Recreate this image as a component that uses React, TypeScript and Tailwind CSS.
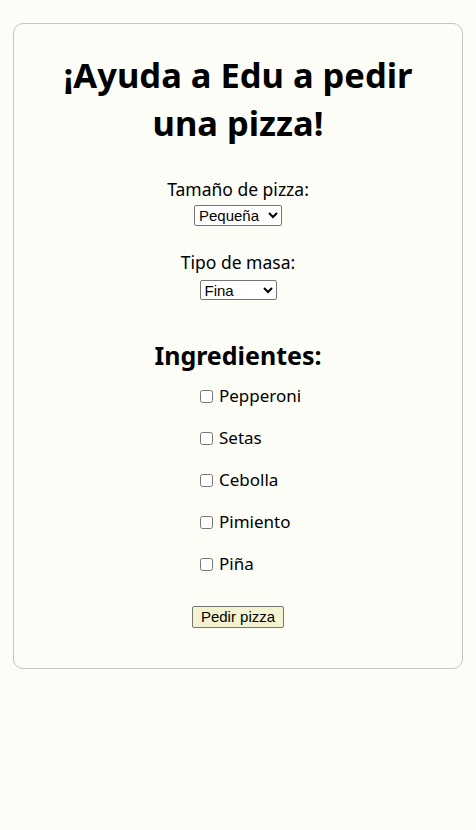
import { useState } from "react";

const ingredientes = ["Pepperoni", "Setas", "Cebolla", "Pimiento", "Piña"];

export default function App() {
  const [size, setSize] = useState("pequena");
  const [masa, setMasa] = useState("fina");
  const [checked, setChecked] = useState<string[]>([]);

  const toggle = (name: string) =>
    setChecked((prev) => (prev.includes(name) ? prev.filter((n) => n !== name) : [...prev, name]));

  return (
    <div className="min-h-[830px] w-full bg-[#fdfdf7] pt-[23px] font-['Noto_Sans',sans-serif] text-black">
      <div className="ml-[13px] flex w-[450px] flex-col items-center rounded-[10px] border border-[#c4c4c4] pt-[27px] pb-[40px]">
        <h1 className="w-[380px] text-center text-[34.5px] font-bold leading-[48px]">
          ¡Ayuda a Edu a pedir una pizza!
        </h1>

        <label htmlFor="size" className="mt-[31px] text-[17.5px] leading-[22px]">
          Tamaño de pizza:
        </label>
        <select
          id="size"
          value={size}
          onChange={(e) => setSize(e.target.value)}
          className="mt-[5px] h-[21px] w-[88px] rounded-[2px] border border-[#767676] bg-white font-['Liberation_Sans',sans-serif] text-[15px]"
        >
          <option value="pequena">Pequeña</option>
          <option value="mediana">Mediana</option>
          <option value="grande">Grande</option>
        </select>

        <label htmlFor="masa" className="mt-[25px] text-[17.5px] leading-[22px]">
          Tipo de masa:
        </label>
        <select
          id="masa"
          value={masa}
          onChange={(e) => setMasa(e.target.value)}
          className="mt-[7px] h-[20px] w-[77px] rounded-[2px] border border-[#767676] bg-white font-['Liberation_Sans',sans-serif] text-[15px]"
        >
          <option value="fina">Fina</option>
          <option value="gruesa">Gruesa</option>
        </select>

        <h2 className="mt-[39px] text-[25px] font-bold leading-[32px]">Ingredientes:</h2>

        <div className="mt-[14px] flex w-full flex-col gap-[20px] pl-[186px]">
          {ingredientes.map((item) => (
            <label key={item} className="flex items-center gap-[6px] text-[17px] leading-[22px]">
              <input
                type="checkbox"
                checked={checked.includes(item)}
                onChange={() => toggle(item)}
                className="m-0 h-[13px] w-[13px]"
              />
              {item}
            </label>
          ))}
        </div>

        <button className="mt-[31px] h-[22px] w-[92px] rounded-[2px] border border-[#767676] bg-[#f3f3d2] font-['Liberation_Sans',sans-serif] text-[15px] leading-[18px]">
          Pedir pizza
        </button>
      </div>
    </div>
  );
}
